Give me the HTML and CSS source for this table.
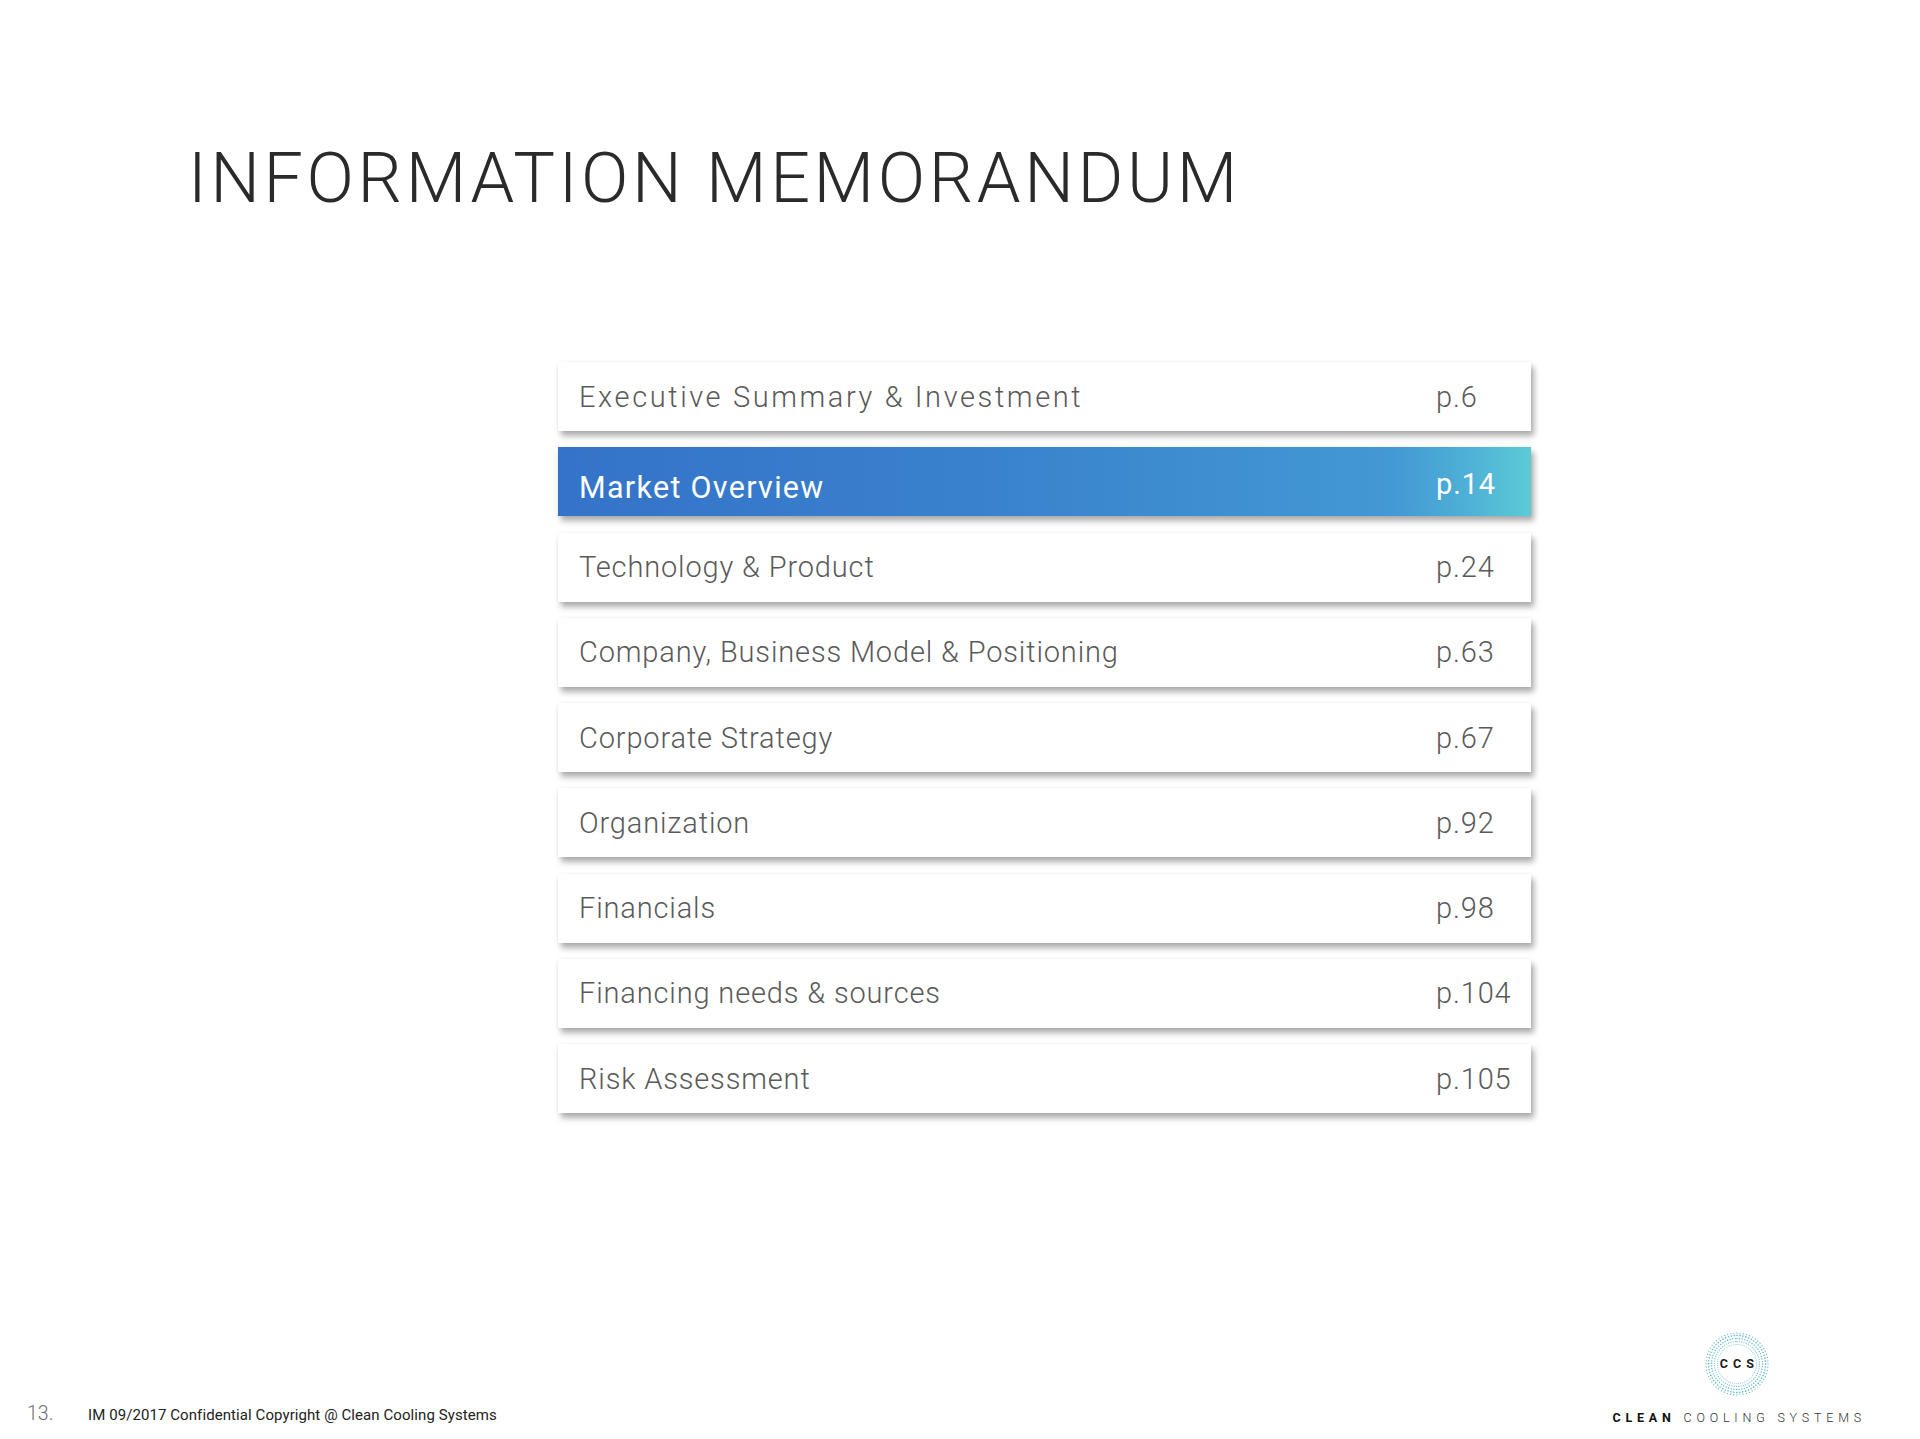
FILE: index.html
```html
<!DOCTYPE html>
<html lang="en">
<head>
<meta charset="utf-8">
<title>Information Memorandum</title>
<link rel="stylesheet" href="styles.css">
</head>
<body>
<div class="page">
  <h1 class="title">INFORMATION MEMORANDUM</h1>

  <ol class="toc">
    <li class="toc-row toc-row--wide"><span class="toc-label">Executive Summary &amp; Investment</span><span class="toc-page">p.6</span></li>
    <li class="toc-row toc-row--active"><span class="toc-label">Market Overview</span><span class="toc-page">p.14</span></li>
    <li class="toc-row"><span class="toc-label">Technology &amp; Product</span><span class="toc-page">p.24</span></li>
    <li class="toc-row"><span class="toc-label">Company, Business Model &amp; Positioning</span><span class="toc-page">p.63</span></li>
    <li class="toc-row"><span class="toc-label">Corporate Strategy</span><span class="toc-page">p.67</span></li>
    <li class="toc-row"><span class="toc-label">Organization</span><span class="toc-page">p.92</span></li>
    <li class="toc-row"><span class="toc-label">Financials</span><span class="toc-page">p.98</span></li>
    <li class="toc-row"><span class="toc-label">Financing needs &amp; sources</span><span class="toc-page">p.104</span></li>
    <li class="toc-row"><span class="toc-label">Risk Assessment</span><span class="toc-page">p.105</span></li>
  </ol>

  <footer class="footer">
    <div class="footer-left">
      <span class="page-num">13.</span>
      <span class="copyright">IM 09/2017 Confidential Copyright @ Clean Cooling Systems</span>
    </div>
    <div class="logo">
      <div class="logo-mark">
        <svg class="logo-ring" width="64" height="64" viewBox="0 0 64 64" aria-hidden="true">
          <g fill="none" stroke-linecap="round" transform="rotate(-90 32 32)">
            <circle cx="32" cy="32" r="19.5" stroke="#9ed2dc" stroke-width="1.2" stroke-dasharray="0 2.042"/>
            <circle cx="32" cy="32" r="22.5" stroke="#82c7d5" stroke-width="1.35" stroke-dasharray="0 2.356"/>
            <circle cx="32" cy="32" r="25.5" stroke="#68bccd" stroke-width="1.5" stroke-dasharray="0 2.670"/>
            <circle cx="32" cy="32" r="28.5" stroke="#58b4c7" stroke-width="1.6" stroke-dasharray="0 2.985"/>
            <circle cx="32" cy="32" r="31" stroke="#72c2d1" stroke-width="1.4" stroke-dasharray="0 3.246"/>
          </g>
        </svg>
        <span class="logo-ccs">CCS</span>
      </div>
      <div class="logo-name"><b>CLEAN</b> COOLING SYSTEMS</div>
    </div>
  </footer>
</div>
</body>
</html>
```

FILE: styles.css
```css
* { box-sizing: border-box; }

html, body {
  margin: 0;
  padding: 0;
  background: #ffffff;
}

.page {
  width: 1920px;
  height: 1439px;
  display: flex;
  flex-direction: column;
  font-family: Roboto, "Liberation Sans", sans-serif;
  overflow: hidden;
}

.title {
  margin: 143px 0 0 0;
  padding-left: 188px;
  font-family: Roboto, "Liberation Sans", sans-serif;
  font-weight: 300;
  font-size: 70px;
  line-height: 70px;
  letter-spacing: 3.6px;
  color: #2a2a2a;
}

.toc {
  list-style: none;
  margin: 149px 0 0 558px;
  padding: 0;
  width: 973px;
  display: flex;
  flex-direction: column;
  gap: 16.25px;
}

.toc-row {
  height: 69px;
  display: grid;
  grid-template-columns: 1fr 95px;
  align-items: center;
  padding-left: 21px;
  background: #ffffff;
  box-shadow: 3px 5px 6px rgba(0, 0, 0, 0.32), 0 0 3px rgba(0, 0, 0, 0.07);
  color: #5a5a5a;
  font-weight: 300;
  font-size: 29px;
  letter-spacing: 0.85px;
}

.toc-row--wide .toc-label {
  letter-spacing: 2.6px;
}

.toc-row--active {
  background: linear-gradient(90deg, #3473c9 0%, #3a82cd 45%, #4399d4 86%, #4fb2d6 94%, #5ccbd7 100%);
  color: #ffffff;
  font-weight: 400;
}

.toc-row--active .toc-label {
  padding-top: 11px;
  font-size: 30.5px;
  letter-spacing: 1.3px;
}

.toc-row--active .toc-page {
  padding-top: 4px;
}

.toc-label,
.toc-page {
  white-space: nowrap;
}

.footer {
  margin-top: auto;
  display: flex;
  justify-content: space-between;
  align-items: flex-end;
  padding: 0 54px 14px 27px;
}

.footer-left {
  display: flex;
  align-items: baseline;
  line-height: 20px;
}

.page-num {
  width: 61px;
  font-size: 19.5px;
  font-weight: 300;
  color: #707070;
}

.copyright {
  font-size: 15px;
  font-weight: 400;
  color: #222222;
  letter-spacing: 0.08px;
}

.logo {
  display: flex;
  flex-direction: column;
  align-items: center;
}

.logo-mark {
  position: relative;
  width: 64px;
  height: 64px;
  margin-bottom: 14px;
}

.logo-ring {
  display: block;
}

.logo-ccs {
  position: absolute;
  left: 0;
  right: 0;
  top: 25px;
  text-align: center;
  font-size: 12.5px;
  line-height: 13px;
  font-weight: 700;
  letter-spacing: 5px;
  padding-left: 5px;
  color: #1a1a1a;
}

.logo-name {
  font-size: 12.5px;
  line-height: 15px;
  letter-spacing: 4.8px;
  padding-left: 4.8px;
  font-weight: 300;
  color: #333333;
  white-space: nowrap;
}

.logo-name b {
  font-weight: 700;
  color: #111111;
}
```
